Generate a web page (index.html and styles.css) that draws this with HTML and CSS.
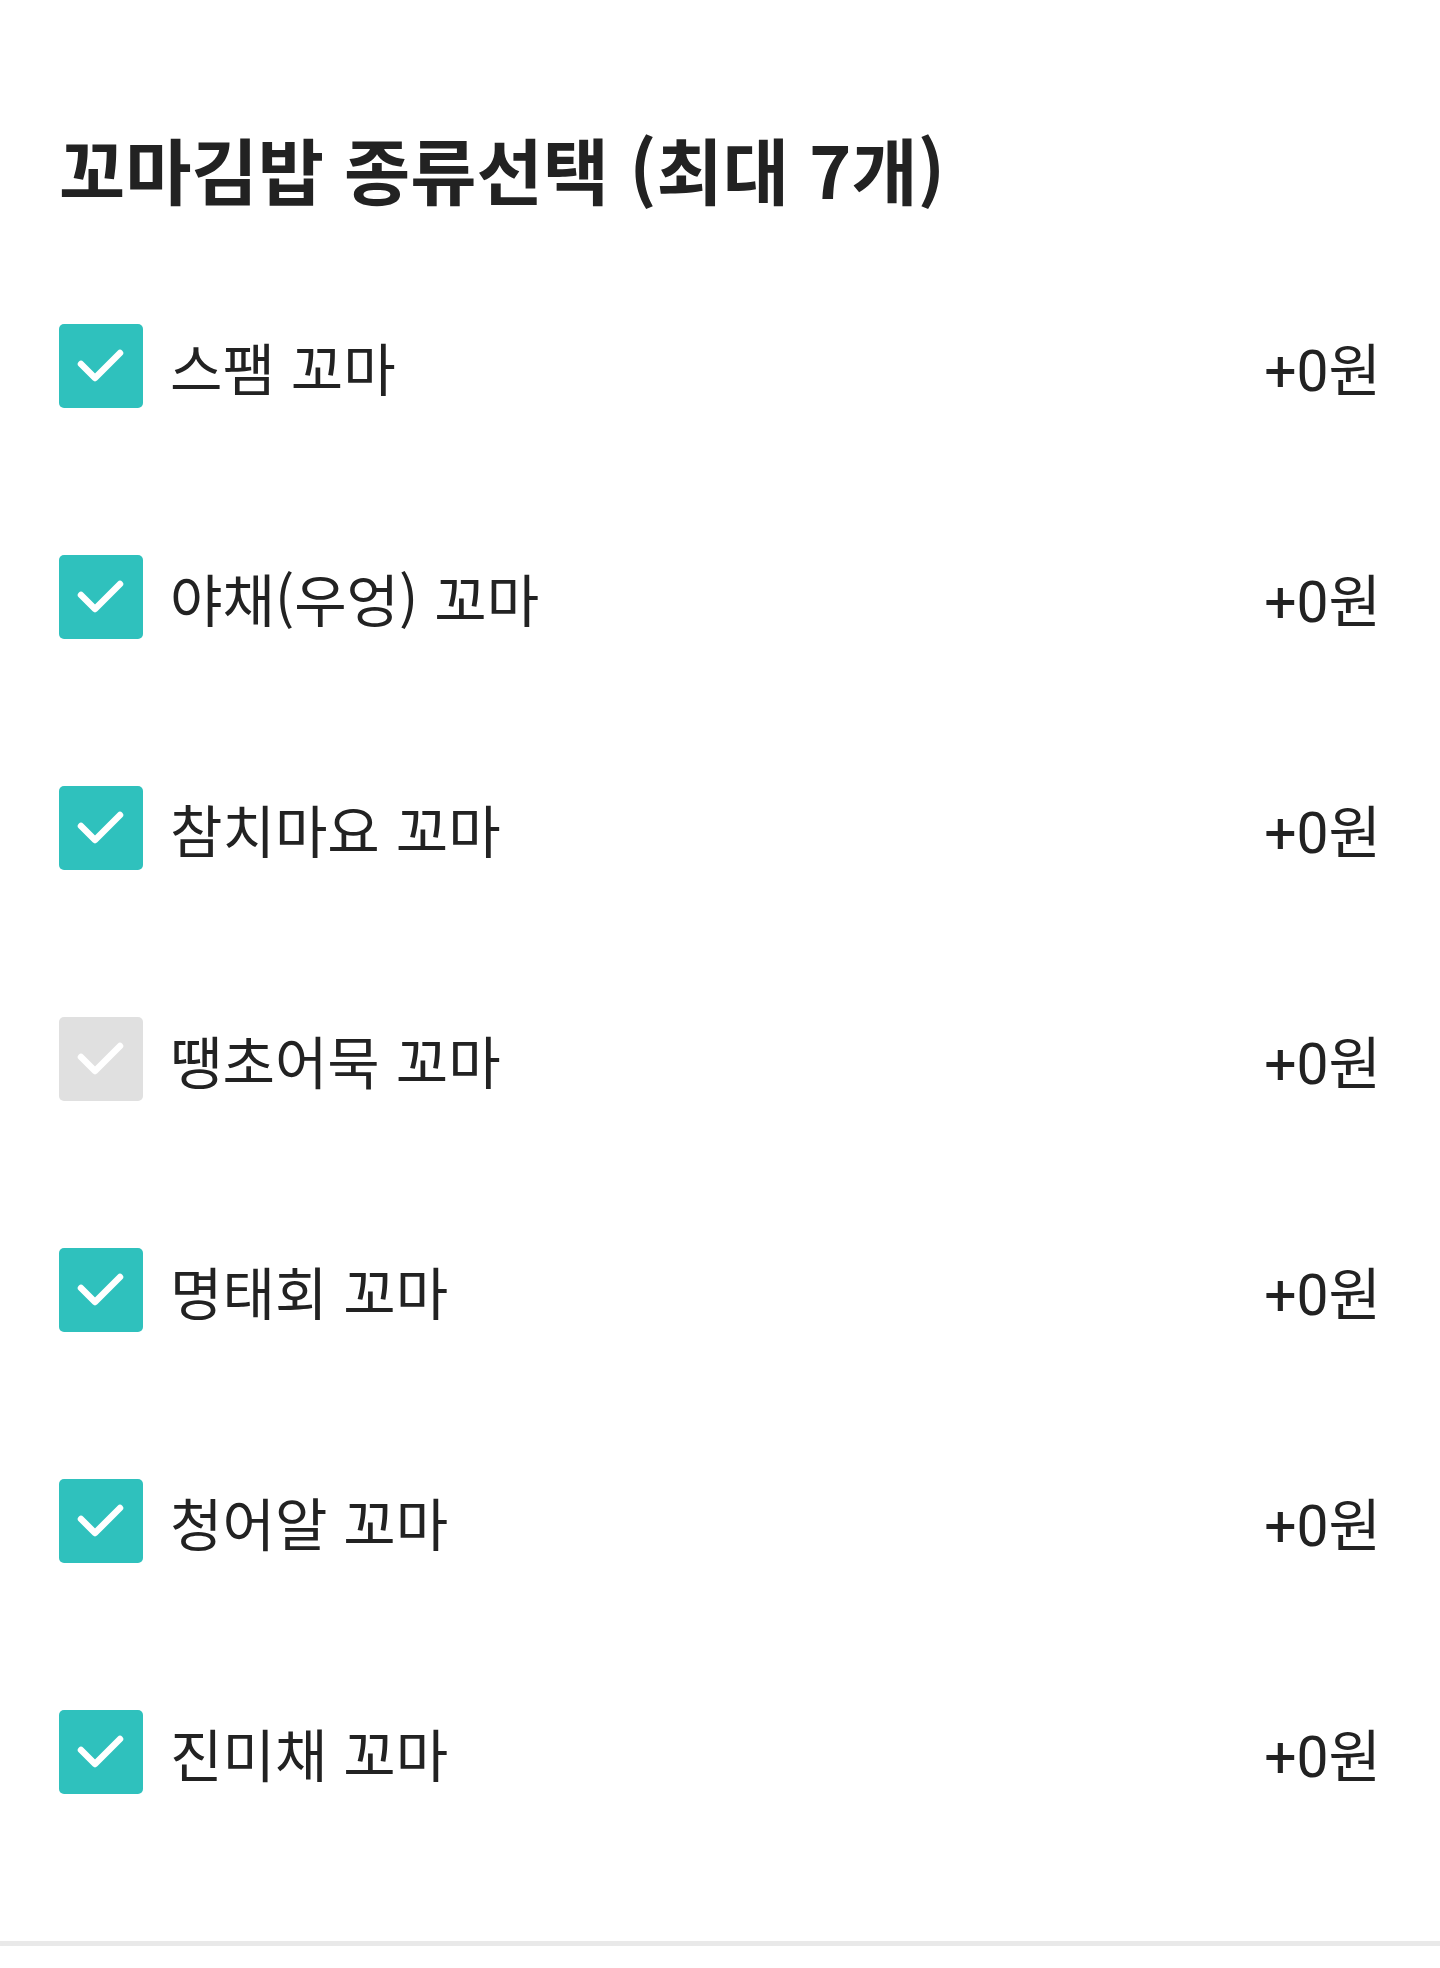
FILE: index.html
```html
<!DOCTYPE html>
<html lang="ko">
<head>
    <meta charset="UTF-8">
    <meta name="viewport" content="width=device-width, initial-scale=1.0">
    <title>꼬마김밥 종류선택</title>
    <link rel="stylesheet" href="styles.css">
</head>
<body>
    <div class="option-group">
        <div class="title">꼬마김밥 종류선택 (최대 7개)</div>
        <ul class="option-list">
            <li class="option">
                <span class="check on"><svg viewBox="0 0 84 84"><path d="M22 40 L36 54 L61 29"/></svg></span>
                <span class="label">스팸 꼬마</span>
                <span class="price">+0원</span>
            </li>
            <li class="option">
                <span class="check on"><svg viewBox="0 0 84 84"><path d="M22 40 L36 54 L61 29"/></svg></span>
                <span class="label">야채(우엉) 꼬마</span>
                <span class="price">+0원</span>
            </li>
            <li class="option">
                <span class="check on"><svg viewBox="0 0 84 84"><path d="M22 40 L36 54 L61 29"/></svg></span>
                <span class="label">참치마요 꼬마</span>
                <span class="price">+0원</span>
            </li>
            <li class="option">
                <span class="check"><svg viewBox="0 0 84 84"><path d="M22 40 L36 54 L61 29"/></svg></span>
                <span class="label">땡초어묵 꼬마</span>
                <span class="price">+0원</span>
            </li>
            <li class="option">
                <span class="check on"><svg viewBox="0 0 84 84"><path d="M22 40 L36 54 L61 29"/></svg></span>
                <span class="label">명태회 꼬마</span>
                <span class="price">+0원</span>
            </li>
            <li class="option">
                <span class="check on"><svg viewBox="0 0 84 84"><path d="M22 40 L36 54 L61 29"/></svg></span>
                <span class="label">청어알 꼬마</span>
                <span class="price">+0원</span>
            </li>
            <li class="option">
                <span class="check on"><svg viewBox="0 0 84 84"><path d="M22 40 L36 54 L61 29"/></svg></span>
                <span class="label">진미채 꼬마</span>
                <span class="price">+0원</span>
            </li>
        </ul>
    </div>
    <div class="divider"></div>
</body>
</html>
```

FILE: styles.css
```css
body {
    margin: 0;
    background: #fff;
    color: #222;
    font-family: "Noto Sans CJK KR", "Noto Sans", sans-serif;
}

.option-group {
    padding: 121px 59px 74px;
}

.title {
    font-size: 72px;
    font-weight: bold;
    line-height: 93px;
    margin-bottom: 36px;
}

.option-list {
    list-style: none;
    margin: 0;
    padding: 0;
}

.option {
    display: flex;
    align-items: center;
    height: 231px;
}

.check {
    width: 84px;
    height: 84px;
    border-radius: 5px;
    background: #e0e0e0;
    flex-shrink: 0;
}

.check.on {
    background: #2fc1bd;
}

.check svg {
    display: block;
    width: 84px;
    height: 84px;
}

.check path {
    fill: none;
    stroke: #fff;
    stroke-width: 6.5;
    stroke-linecap: round;
    stroke-linejoin: round;
}

.label {
    margin-left: 27px;
    font-size: 57px;
    flex: 1;
}

.price {
    font-family: Roboto, "Noto Sans CJK KR", sans-serif;
    font-size: 57px;
}

.divider {
    height: 5px;
    background: #e9e9e9;
}
```
